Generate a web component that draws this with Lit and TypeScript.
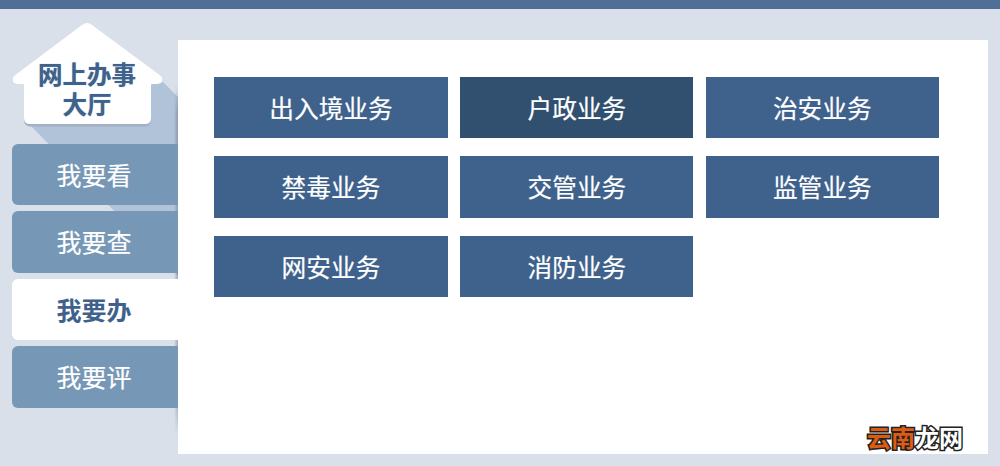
import { LitElement, html, css, svg } from "lit";
import { customElement } from "lit/decorators.js";

const rows = ["出入境业务", "户政业务", "治安业务", "禁毒业务", "交管业务", "监管业务", "网安业务", "消防业务"];
const nav = ["我要看", "我要查", "我要办", "我要评"];

@customElement("app-root")
export class AppRoot extends LitElement {
  static styles = css`
    :host { display: block; width: 1000px; height: 466px; background: #d9e0e9; overflow: hidden; position: relative;
      font-family: "Noto Sans CJK SC", "Liberation Sans", sans-serif; }
    .top { height: 9px; background: #4f6f97; }
    .main { display: flex; height: 457px; }
    .side { width: 178px; flex: none; position: relative; padding: 135px 0 0 12px; box-sizing: border-box; }
    .art { position: absolute; left: 0; top: -9px; width: 178px; height: 466px; }
    .label { position: absolute; left: 12px; top: 50px; width: 150px; text-align: center; color: #3f628c; font-weight: 700; font-size: 24.5px; line-height: 30px; text-shadow: 0 0 1px rgba(63, 98, 140, .6); }
    .nav { position: relative; display: flex; flex-direction: column; gap: 6px; }
    .item { height: 61px; border-radius: 6px 0 0 6px; background: #7697b6; color: #fff; font-size: 25px; display: flex; align-items: center; justify-content: center; padding: 0 2px 2px 0; box-sizing: border-box; -webkit-text-stroke: .2px #fff; }
    .item:nth-child(even) { height: 62px; }
    .item.on { background: #fff; color: #3f628c; font-weight: 700; -webkit-text-stroke: 0; }
    .panel { width: 810px; height: 414px; margin-top: 31px; background: #fff; box-sizing: border-box; padding: 37px 49px 0 36px; position: relative; }
    .grid { display: grid; grid-template-columns: 234px 233px 233px; grid-template-rows: 61px 62px 61px; gap: 18px 12.4px; }
    .btn { background: #3f628c; color: #fff; font-size: 24.7px; display: flex; align-items: center; justify-content: center; padding-bottom: 2px; box-sizing: border-box; -webkit-text-stroke: .2px #fff; }
    .btn.dark { background: #31506f; }
    .logo { position: absolute; right: 25px; bottom: 3px; font-size: 24px; line-height: 28px; font-weight: 700; -webkit-text-stroke: 3px #222; paint-order: stroke fill; }
    .or { color: #dd5c12; }
    .wh { color: #fff; }
  `;
  render() {
    return html`
      <div class="top"></div>
      <div class="main">
        <div class="side">
          <svg class="art" viewBox="0 0 178 466">
            ${svg`<defs>
              <linearGradient id="edgeX" x1="0" x2="1" y1="0" y2="0">
                <stop offset="0" stop-color="#6f7a88" stop-opacity="0"/>
                <stop offset="1" stop-color="#6f7a88" stop-opacity=".55"/>
              </linearGradient>
              <linearGradient id="fade" x1="0" x2="0" y1="0" y2="1">
                <stop offset="0" stop-color="#fff" stop-opacity="0"/>
                <stop offset=".08" stop-color="#fff"/>
                <stop offset=".9" stop-color="#fff"/>
                <stop offset="1" stop-color="#fff" stop-opacity="0"/>
              </linearGradient>
              <mask id="edgeMask"><rect x="174" y="85" width="4" height="350" fill="url(#fade)"/></mask>
            </defs>
            <polygon points="162,81 178,97 178,276 30,125" fill="#b0c3d9"/>
            <rect x="174" y="85" width="4" height="350" fill="url(#edgeX)" mask="url(#edgeMask)"/>
            <rect x="24" y="100" width="127" height="26.5" rx="6" fill="#a3b1c3"/>
            <path d="M24 84 H18 Q10 83 14 76 L82 25 Q87 21 92 25 L161 76 Q165 83 157 84 H151 V118 Q151 124 145 124 H30 Q24 124 24 118 Z" fill="#fff"/>`}
          </svg>
          <div class="label">网上办事<br />大厅</div>
          <div class="nav">
            ${nav.map((n, i) => html`<div class="item ${i === 2 ? "on" : ""}">${n}</div>`)}
          </div>
        </div>
        <div class="panel">
          <div class="grid">
            ${rows.map((r, i) => html`<div class="btn ${i === 1 ? "dark" : ""}">${r}</div>`)}
          </div>
          <div class="logo"><span class="or">云南</span><span class="wh">龙网</span></div>
        </div>
      </div>
    `;
  }
}
